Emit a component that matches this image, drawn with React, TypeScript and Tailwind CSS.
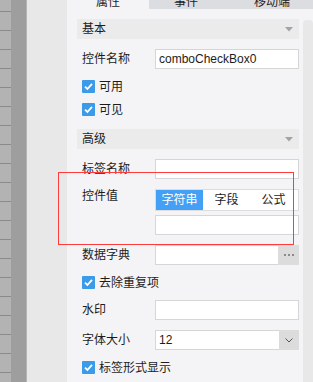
import React from "react";

const FONT = { fontFamily: '"Liberation Sans", "Noto Sans CJK SC", sans-serif' };

function Check() {
  return (
    <div className="w-[13px] h-[13px] rounded-[1px] bg-[#3c9be8] flex items-center justify-center shrink-0">
      <svg width="11" height="11" viewBox="0 0 11 11">
        <path d="M2 5.6 L4.4 8 L9 2.8" fill="none" stroke="#fff" strokeWidth="1.8" />
      </svg>
    </div>
  );
}

function CheckRow({ label, className = "" }: { label: string; className?: string }) {
  return (
    <div className={"h-[23px] flex items-center pl-[5px] gap-[4px] " + className}>
      <Check />
      <span className="text-[12px] leading-[14px] text-[#1c1c1c]">{label}</span>
    </div>
  );
}

function Label({ text }: { text: string }) {
  return <div className="w-[78px] pl-[5px] text-[12px] leading-[14px] text-[#1c1c1c] shrink-0">{text}</div>;
}

function Field({ label, children, className = "" }: { label: string; children?: React.ReactNode; className?: string }) {
  return (
    <div className={"h-[20px] flex items-center " + className}>
      <Label text={label} />
      {children ?? <div className="h-[20px] w-[144px] border border-[#d6d6d6] bg-white shrink-0" />}
    </div>
  );
}

function Header({ text, className = "" }: { text: string; className?: string }) {
  return (
    <div className={"h-[20px] bg-[#ebebeb] flex items-center justify-between pl-[5px] pr-[6px] " + className}>
      <span className="text-[12px] leading-[14px] text-[#1c1c1c]">{text}</span>
      <svg width="8" height="5" viewBox="0 0 8 5">
        <path d="M0 0 L8 0 L4 4.5 Z" fill="#a3a3a3" />
      </svg>
    </div>
  );
}

export default function App() {
  const blocks = Array.from({ length: 20 });
  return (
    <div className="w-[313px] h-[382px] overflow-hidden flex relative bg-[#f4f4f6]" style={FONT}>
      {/* left strip */}
      <div className="w-[11px] h-full bg-[#b3b3b3] flex flex-col shrink-0">
        <div className="h-[11px] shrink-0" />
        {blocks.map((_, i) => (
          <div key={i} className="h-[19px] shrink-0 border-t border-[#8a8a8a]" />
        ))}
      </div>
      <div className="w-[15px] h-full bg-[#9e9e9e] shrink-0" />
      <div className="w-[1px] h-full bg-[#b5b5b5] shrink-0" />
      <div className="w-[40px] h-full bg-[#e8e8e8] shrink-0" />

      {/* panel */}
      <div className="w-[246px] h-full flex flex-col bg-[#f4f4f6] shrink-0">
        <div className="h-[9px] overflow-hidden flex shrink-0">
          <div className="w-[82px] bg-[#f4f4f6] mt-[-4px] h-[13px] text-center text-[12px] leading-[13px] text-[#1c1c1c]">属性</div>
          <div className="w-[82px] bg-[#dcdde0] mt-[-4px] h-[13px] text-center text-[12px] leading-[13px] text-[#1c1c1c] pr-[8px]">事件</div>
          <div className="w-[82px] bg-[#dcdde0] mt-[-4px] h-[13px] text-center text-[12px] leading-[13px] text-[#1c1c1c]">移动端</div>
        </div>
        <div className="flex flex-1">
          <div className="w-[232px] pl-[10px] flex flex-col shrink-0">
            <Header text="基本" className="mt-[10px]" />
            <Field label="控件名称" className="mt-[10px]">
              <div className="h-[20px] w-[144px] shrink-0 border border-[#d6d6d6] bg-white flex items-center pl-[3px] text-[12px] text-[#1c1c1c]">
                comboCheckBox0
              </div>
            </Field>
            <CheckRow label="可用" className="mt-[6px]" />
            <CheckRow label="可见" />
            <Header text="高级" className="mt-[8px]" />
            <Field label="标签名称" className="mt-[10px]" />
            <div className="flex mt-[10px]">
              <Label text="控件值" />
              <div className="w-[144px] shrink-0 flex flex-col">
                <div className="h-[22px] w-[144px] border border-[#dcdcdc] bg-white flex text-[12px] text-[#1c1c1c]">
                  <div className="w-[47px] shrink-0 bg-[#44a0f6] text-white flex items-center justify-center">字符串</div>
                  <div className="w-[47px] shrink-0 flex items-center justify-center">字段</div>
                  <div className="w-[47px] shrink-0 flex items-center justify-center">公式</div>
                </div>
                <div className="h-[20px] w-[144px] border border-[#d6d6d6] bg-white mt-[4px]" />
              </div>
            </div>
            <Field label="数据字典" className="mt-[10px]">
              <div className="h-[20px] w-[144px] shrink-0 flex">
                <div className="flex-1 border border-r-0 border-[#d6d6d6] bg-white" />
                <div className="w-[21px] bg-[#dcdcdc] flex items-center justify-center gap-[2px]">
                  <span className="w-[2px] h-[2px] bg-[#8a8a8a]" />
                  <span className="w-[2px] h-[2px] bg-[#8a8a8a]" />
                  <span className="w-[2px] h-[2px] bg-[#8a8a8a]" />
                </div>
              </div>
            </Field>
            <CheckRow label="去除重复项" className="mt-[6px]" />
            <Field label="水印" className="mt-[6px]" />
            <Field label="字体大小" className="mt-[10px]">
              <div className="h-[20px] w-[144px] shrink-0 flex">
                <div className="flex-1 border border-r-0 border-[#d6d6d6] bg-white flex items-center pl-[3px] text-[12px] text-[#1c1c1c]">12</div>
                <div className="w-[20px] bg-[#dcdcdc] flex items-center justify-center">
                  <svg width="8" height="5" viewBox="0 0 8 5">
                    <path d="M0.5 0.5 L4 4 L7.5 0.5" fill="none" stroke="#555" strokeWidth="1" />
                  </svg>
                </div>
              </div>
            </Field>
            <CheckRow label="标签形式显示" className="mt-[6px]" />
          </div>
          <div className="w-[4px] shrink-0" />
          <div className="w-[10px] shrink-0 flex flex-col">
            <div className="mt-[11px] flex-1 bg-[#e8e8e8] rounded-t-[4px]" />
          </div>
        </div>
      </div>

      {/* red annotation rectangle */}
      <div className="absolute left-[58px] top-[172px] w-[236px] h-[73px] border border-[#ff3b3b] pointer-events-none" />
    </div>
  );
}
